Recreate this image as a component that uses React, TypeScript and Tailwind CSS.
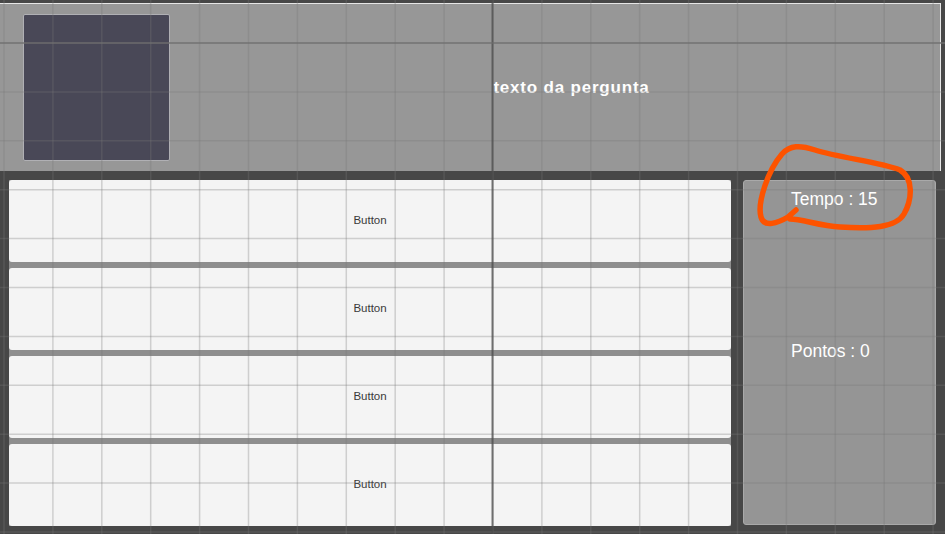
import React from 'react';

// unity scene grid, origin at the axis lines
const STEP = 48.9;
const xs = Array.from({ length: 20 }, (_, i) => 4 + i * STEP);
const ys = Array.from({ length: 12 }, (_, i) => 43 - STEP + i * STEP);

function Grid() {
    return (
        <svg className="absolute inset-0 pointer-events-none" width={945} height={534}>
            {xs.map(x => (
                <line key={'v' + x} x1={x} y1={0} x2={x} y2={534} stroke="rgba(120,120,120,0.3)" strokeWidth={1.5} />
            ))}
            {ys.map(y => (
                <line key={'h' + y} x1={0} y1={y} x2={945} y2={y} stroke="rgba(120,120,120,0.3)" strokeWidth={1.5} />
            ))}
            <line x1={492.5} y1={0} x2={492.5} y2={534} stroke="rgba(75,75,75,0.75)" strokeWidth={2} />
            <line x1={0} y1={43} x2={945} y2={43} stroke="rgba(110,110,110,0.6)" strokeWidth={2} />
        </svg>
    );
}

function Scribble() {
    return (
        <svg className="absolute inset-0 pointer-events-none" width={945} height={534}>
            <path
                d="M 796 210 L 788 217 C 778 223, 764 228, 761 217 C 757 203, 768 170, 782 154 C 790 145, 800 145, 815 150 C 840 158, 880 162, 900 170 C 914 178, 912 200, 904 214 C 896 228, 870 229, 840 227 C 820 226, 802 219, 790 219"
                fill="none"
                stroke="#fd5300"
                strokeWidth={5.5}
                strokeLinecap="round"
                strokeLinejoin="round"
            />
        </svg>
    );
}

function AnswerButton() {
    return (
        <div className="h-[82px] bg-[#f4f4f4] rounded-[3px] flex items-center justify-center">
            <span className="text-[11.5px] text-[#3a3a3a]">Button</span>
        </div>
    );
}

export default function App() {
    return (
        <div className="relative w-[945px] h-[534px] overflow-hidden bg-[#474747] font-['Liberation_Sans',Arial,sans-serif]">
            {/* painel da pergunta */}
            <div className="pt-[3px] pr-[4px]">
                <div className="h-[168px] bg-[#979797] border-t border-r border-[#e6e6e6] flex items-center pl-[23px]">
                    <div className="w-[147px] h-[147px] bg-[#494857] border border-[#b0b0b4] rounded-[2px] self-start mt-[10px]" />
                    <div className="flex-1 pl-[33px] text-center text-white font-bold text-[17px] tracking-[0.8px]">
                        texto da pergunta
                    </div>
                </div>
            </div>

            {/* respostas + placar */}
            <div className="flex px-[9px] pt-[9px] gap-[12px]">
                <div className="w-[722px] bg-[#8e8e8e] flex flex-col gap-[6px]">
                    <AnswerButton />
                    <AnswerButton />
                    <AnswerButton />
                    <AnswerButton />
                </div>
                <div className="flex-1 h-[345px] bg-[#959595] border border-[#a9a9a9] rounded-[3px] flex flex-col pl-[47px] text-white text-[17.5px]">
                    <div className="pt-[7px] leading-[22px]">Tempo : 15</div>
                    <div className="mt-[130px] leading-[22px]">Pontos : 0</div>
                </div>
            </div>

            <Grid />
            <Scribble />
        </div>
    );
}
